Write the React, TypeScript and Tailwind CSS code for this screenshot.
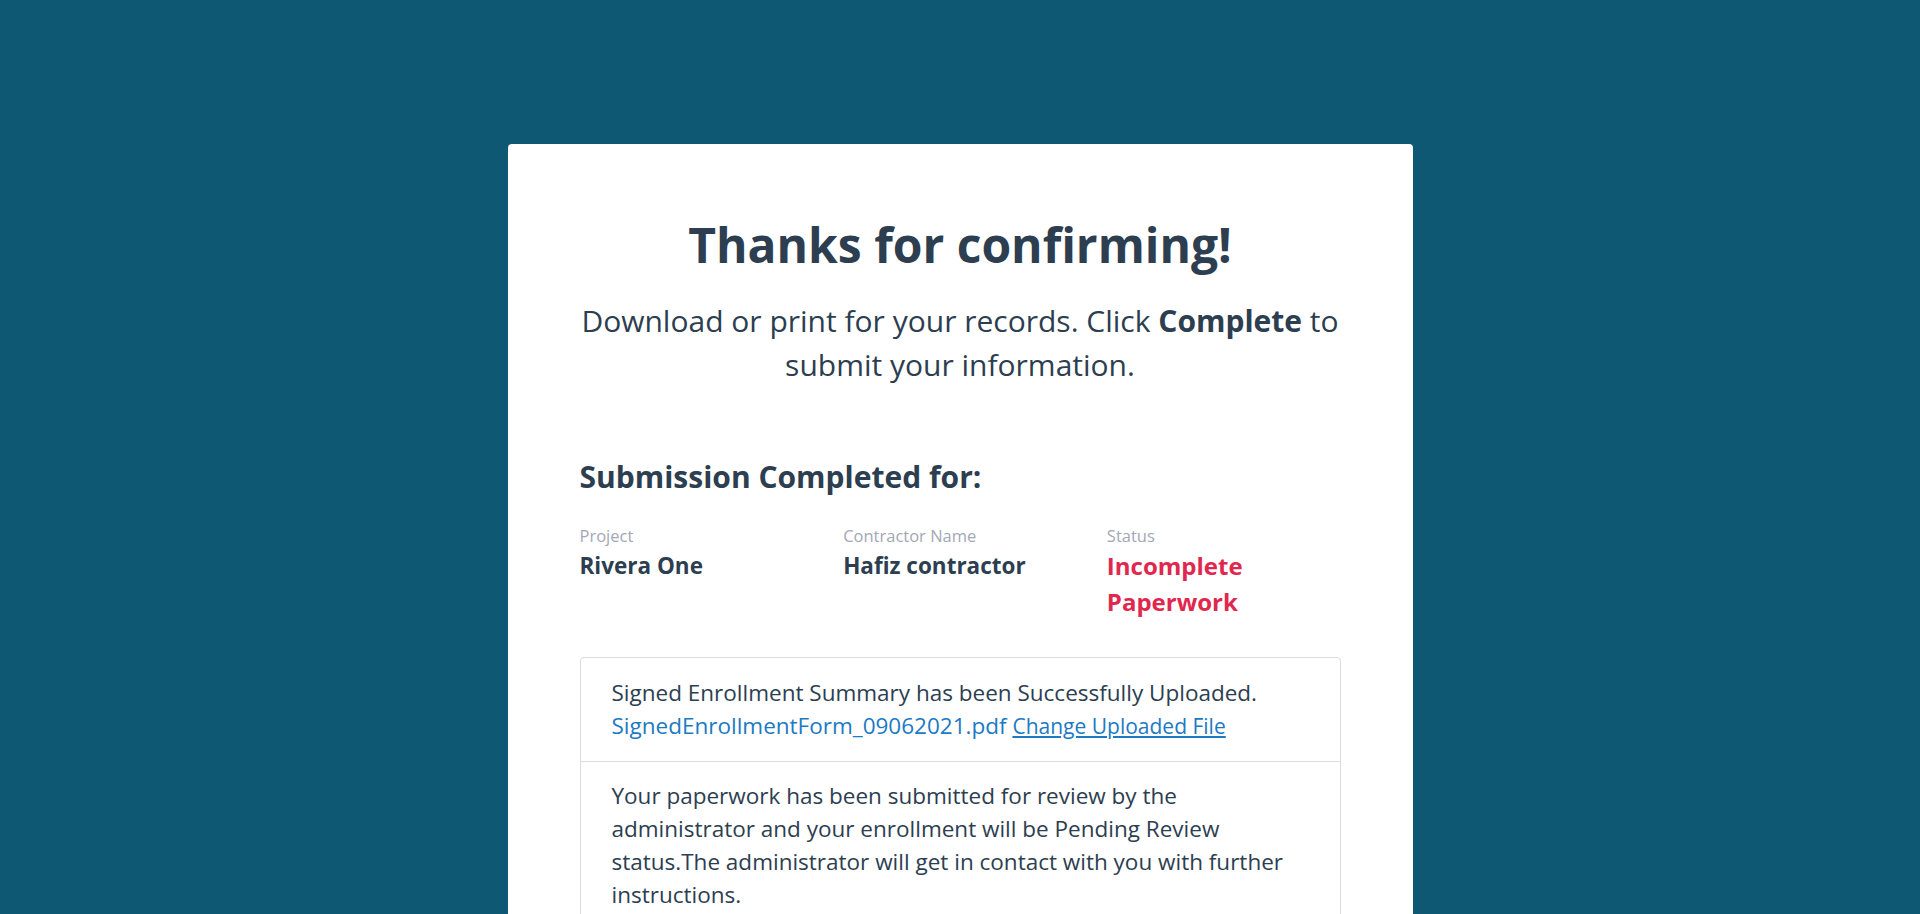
export default function App() {
  return (
    <div className="min-h-[2325px] bg-[#0e5874] pt-[144px] pb-[144px] font-['Open_Sans',sans-serif] text-[#2c3e50]">
      <div className="mx-auto w-[905px] rounded bg-white p-[72px]">
        {/* Header */}
        <h1 className="text-center text-[48px] font-bold leading-[1.2]">Thanks for confirming!</h1>
        <p className="mt-[25px] text-center text-[30px] leading-[44px]">
          Download or print for your records. Click <b className="font-bold">Complete</b> to
          <br />
          submit your information.
        </p>

        {/* Summary */}
        <h2 className="mt-[72px] text-[30px] font-bold leading-[1.2]">Submission Completed for:</h2>
        <div className="mt-[29px] grid grid-cols-3 gap-[30px]">
          <div>
            <p className="text-[16.5px] leading-[1.5] text-[#a3a7b5]">Project</p>
            <p className="text-[22.5px] font-bold leading-[35px]">Rivera One</p>
          </div>
          <div>
            <p className="text-[16.5px] leading-[1.5] text-[#a3a7b5]">Contractor Name</p>
            <p className="text-[22.5px] font-bold leading-[35px]">Hafiz contractor</p>
          </div>
          <div>
            <p className="text-[16.5px] leading-[1.5] text-[#a3a7b5]">Status</p>
            <p className="text-[24px] font-bold leading-[36px] text-[#e0284f]">Incomplete Paperwork</p>
          </div>
        </div>

        {/* Upload box */}
        <div className="mt-[37px] rounded-sm border border-[#dcdcdc] text-[22.5px] leading-[33px]">
          <div className="border-b border-[#dcdcdc] px-[31px] pt-[18px] pb-[18px]">
            <p>Signed Enrollment Summary has been Successfully Uploaded.</p>
            <p>
              <span className="text-[#1b7ac3]">SignedEnrollmentForm_09062021.pdf</span>{' '}
              <a href="#" className="text-[21px] text-[#1b7ac3] underline">Change Uploaded File</a>
            </p>
          </div>
          <div className="px-[31px] pt-[17px] pb-[20px]">
            <p>
              Your paperwork has been submitted for review by the administrator and your enrollment will be Pending Review status.The administrator will get in contact with you with further instructions.
            </p>
          </div>
        </div>
      </div>
    </div>
  );
}
